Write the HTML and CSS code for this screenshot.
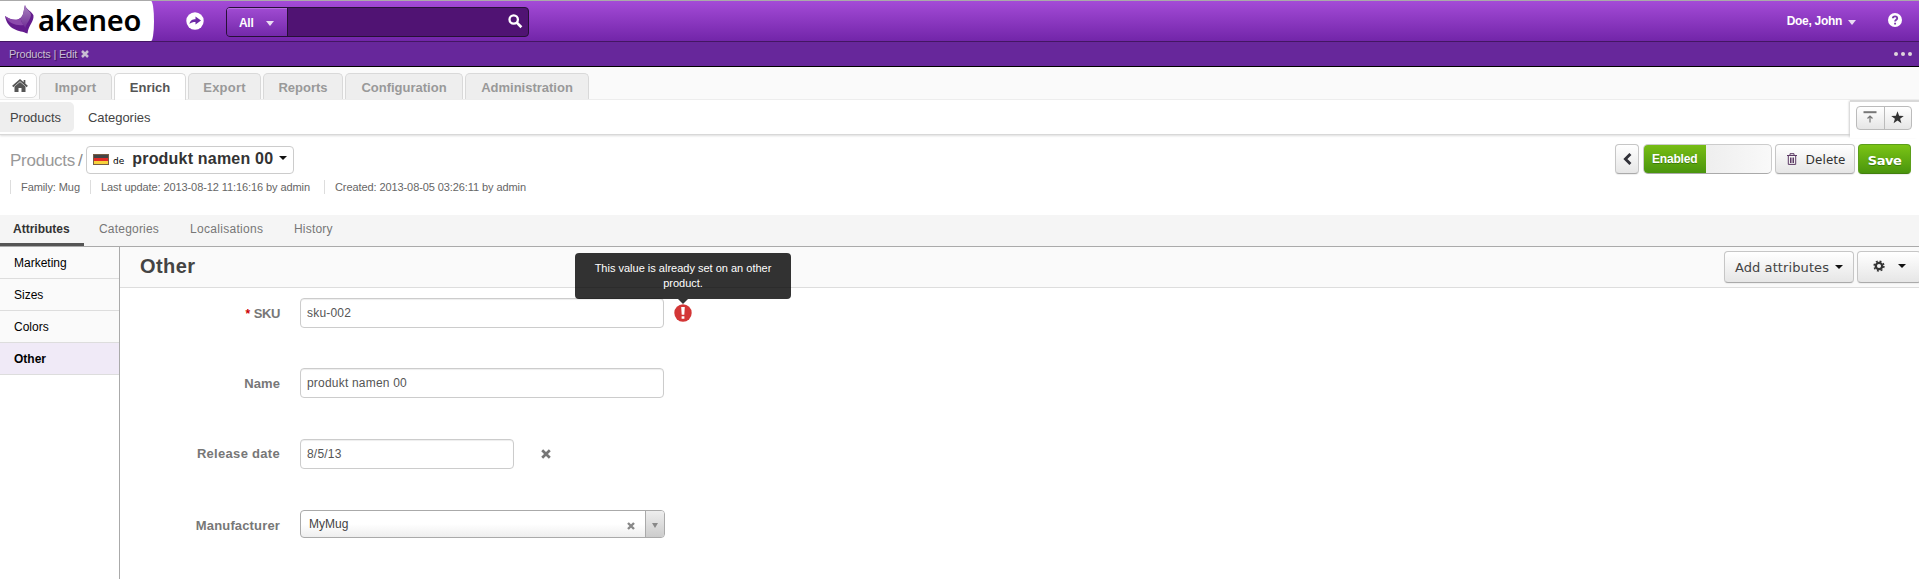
FILE: index.html
```html
<!DOCTYPE html>
<html lang="en">
<head>
<meta charset="utf-8">
<title>Products | Edit</title>
<link rel="stylesheet" href="styles.css">
</head>
<body>
<header class="topbar">
  <div class="brand">
    <svg class="brand-mark" width="30" height="30" viewBox="0 0 30 30"><defs><linearGradient id="wing" x1="0" y1="0" x2="0" y2="1"><stop offset="0" stop-color="#a984bf"/><stop offset="1" stop-color="#6f2d95"/></linearGradient></defs><path d="M20 0C21 5 27 6 28.500 10.500C29 17 23.500 20 22.500 28.500C14 25 3 26 0 11C5 14.500 11 16.500 15.500 13C19 10 18.500 5 20 0Z" fill="#641c8e"/><path d="M20 0C21 5 26 6 26 10C25 16 21 18 20.500 23C17.500 19 16 16 15.500 13C19 10 18.500 5 20 0Z" fill="url(#wing)"/><path d="M0 11C5 14.500 11 16.500 15.500 13C16 16 17 18 18.500 20C12 21 4 19 0 11Z" fill="#8b4aab"/></svg>
    <span class="brand-name">akeneo</span>
  </div>
  <svg class="share" width="18" height="18" viewBox="0 0 18 18"><circle cx="9" cy="9" r="8.700" fill="#fff"/><path d="M3.500 12C4 8.500 6.500 7.300 9.500 7.300V4.500L15 8.500L9.500 12.500V10C7 10 5 10.500 3.500 12Z" fill="#6d2aa5"/></svg>
  <div class="search">
    <div class="search-scope"><span>All</span><i class="caret light"></i></div>
    <svg class="search-icon" width="15" height="15" viewBox="0 0 15 15"><circle cx="5.700" cy="5.500" r="4.200" fill="none" stroke="#fff" stroke-width="2.300"/><path d="M8.800 8.600L13.400 13.200" stroke="#fff" stroke-width="2.700"/></svg>
  </div>
  <div class="account"><span>Doe, John</span><i class="caret light"></i></div>
  <svg class="help" width="14" height="14" viewBox="0 0 14 14"><circle cx="7" cy="7" r="7" fill="#fff"/><path d="M4.900 5.300C4.900 2.800 9.200 2.800 9.200 5.200C9.200 6.700 7.100 6.700 7.100 8.600M7.100 9.700V11.500" fill="none" stroke="#7c3aae" stroke-width="1.900"/></svg>
</header>
<div class="pinbar">
  <span class="pin-title">Products | Edit</span>
  <svg width="8" height="8" viewBox="0 0 8 8"><path d="M1 1L7 7M7 1L1 7" stroke="#c9bdd3" stroke-width="2.500"/></svg>
  <div class="dots"><i></i><i></i><i></i></div>
</div>
<nav class="mainnav">
  <a class="home"><svg width="16" height="14" viewBox="0 0 16 14"><path d="M2.500 7.600L8 3L13.500 7.600V13H9.500V9H6.500V13H2.500Z" fill="#555"/><path d="M.700 7.500L8 1.200L15.300 7.500M12.500 1V4.500" fill="none" stroke="#555" stroke-width="1.700"/></svg></a>
  <a class="tab t-import"><span>Import</span></a>
  <a class="tab t-enrich active"><span>Enrich</span></a>
  <a class="tab t-export"><span>Export</span></a>
  <a class="tab t-reports"><span>Reports</span></a>
  <a class="tab t-config"><span>Configuration</span></a>
  <a class="tab t-admin"><span>Administration</span></a>
</nav>
<div class="subnav">
  <div class="subnav-links"><a class="sub current">Products</a><a class="sub">Categories</a></div>
  <div class="pin-tools">
    <div class="pin-group">
      <span class="pin-button"><svg width="14" height="12" viewBox="0 0 14 12"><path d="M.500 1.200H13.500" stroke="#777" stroke-width="2"/><path d="M7 11.500V5M4.500 7.500L7 5L9.500 7.500" fill="none" stroke="#777" stroke-width="1.200"/></svg></span>
      <span class="pin-button"><svg width="13" height="13" viewBox="0 0 13 13"><path d="M6.500 .300L8.100 4.800L12.800 4.900L9.100 7.700L10.400 12.300L6.500 9.600L2.600 12.300L3.900 7.700L.200 4.900L4.900 4.800Z" fill="#333"/></svg></span>
    </div>
  </div>
</div>
<section class="entity">
  <div class="entity-info">
    <div class="titleline">
      <span class="crumb">Products</span><span class="slash">/</span>
      <div class="locale"><i class="flag"></i><span class="code">de</span><strong>produkt namen 00</strong><i class="caret"></i></div>
    </div>
    <div class="meta"><span class="m-family"><b>Family: Mug</b></span><span class="m-update"><b>Last update: 2013-08-12 11:16:16 by admin</b></span><span class="m-created"><b>Created: 2013-08-05 03:26:11 by admin</b></span></div>
  </div>
  <div class="actions">
    <span class="btn back"><svg width="9" height="12" viewBox="0 0 9 12"><path d="M7.400 1L2.400 6L7.400 11" fill="none" stroke="#303038" stroke-width="2.900"/></svg></span>
    <span class="toggle"><b>Enabled</b></span>
    <span class="btn delete"><svg width="10" height="12" viewBox="0 0 10 12"><path d="M0 2.500H10M3 2V.700H7V2M1.300 3V11.400H8.700V3M3.500 4.500V10M5 4.500V10M6.500 4.500V10" fill="none" stroke="#5c3a64" stroke-width="1"/></svg><span>Delete</span></span>
    <span class="btn save">Save</span>
  </div>
</section>
<nav class="formtabs"><a class="ft ft1 selected"><span>Attributes</span></a><a class="ft ft2">Categories</a><a class="ft ft3">Localisations</a><a class="ft ft4">History</a></nav>
<main class="workspace">
  <aside class="groups"><a>Marketing</a><a>Sizes</a><a>Colors</a><a class="chosen">Other</a></aside>
  <section class="panel">
    <div class="panel-head">
      <h1>Other</h1>
      <span class="btn add"><span>Add attributes</span><i class="caret"></i></span>
      <span class="btn gear"><svg width="12" height="12" viewBox="0 0 12 12"><circle cx="6" cy="6" r="3.200" fill="none" stroke="#333" stroke-width="2.300"/><circle cx="6" cy="6" r="4.900" fill="none" stroke="#333" stroke-width="1.500" stroke-dasharray="1.925 1.925"/></svg><i class="caret"></i></span>
    </div>
    <div class="fields">
      <div class="field"><label class="l-sku"><em>*</em>SKU</label><div class="input"><span>sku-002</span></div>
        <div class="error"><svg width="18" height="18" viewBox="0 0 18 18"><circle cx="9" cy="9" r="8.700" fill="#d33636"/><path d="M7.200 3H10.800L10.300 10.800H7.700ZM7.600 12.200H10.400V14.700H7.600Z" fill="#fff"/></svg><div class="tooltip"><span>This value is already set on an other</span><br><span>product.</span></div></div>
      </div>
      <div class="field"><label>Name</label><div class="input"><span>produkt namen 00</span></div></div>
      <div class="field"><label class="l-date">Release date</label><div class="input date"><span>8/5/13</span></div><svg class="clear" width="10" height="10" viewBox="0 0 10 10"><path d="M1.200 1.200L8.800 8.800M8.800 1.200L1.200 8.800" stroke="#777" stroke-width="2.700"/></svg></div>
      <div class="field last"><label class="l-maker">Manufacturer</label><div class="select"><span>MyMug</span><svg width="8" height="8" viewBox="0 0 8 8"><path d="M1 1L7 7M7 1L1 7" stroke="#888" stroke-width="2.400"/></svg><div class="arrow"><i></i></div></div></div>
    </div>
  </section>
</main>
</body>
</html>
```
FILE: styles.css
```css
* { box-sizing: border-box; }
body { margin: 0; height: 579px; overflow: hidden; background: #fff; color: #444; font: 12px/18px "Liberation Sans", Arial, sans-serif; display: flex; flex-direction: column; }
svg { display: block; flex: none; }
span, strong, b { white-space: nowrap; }
.caret { display: block; width: 0; height: 0; border: 4px solid transparent; border-top-color: #111; border-bottom: 0; flex: none; }
.caret.light { border-top-color: #eadcf3; border-top-width: 5px; }

.topbar { height: 42px; flex: none; border-top: 1px solid #aaa; border-bottom: 1px solid #431663; background: linear-gradient(#a44bd7, #7225a9); display: flex; align-items: flex-start; color: #fff; font-weight: bold; }
.brand { width: 154px; height: 40px; background: #fff; border-radius: 0 3px 3px 0 / 0 20px 20px 0; display: flex; padding: 4px 0 0 5px; }
.brand-name { font: 600 29px/36px "Noto Sans", "Open Sans", sans-serif; color: #000; margin: -3px 0 0 3px; letter-spacing: -.2px; }
.share { margin: 11px 0 0 32px; }
.search { margin: 6px 0 0 22px; width: 303px; height: 30px; border: 1px solid #271037; border-radius: 4px; background: #501373; display: flex; justify-content: space-between; }
.search-scope { width: 61px; border-right: 1px solid #271037; border-radius: 3px 0 0 3px; background: linear-gradient(#a04bd2, #7429aa); box-shadow: inset 0 1px #b76be0; display: flex; align-items: center; padding: 2px 13px 0 12px; justify-content: space-between; letter-spacing: -.3px; }
.search-icon { margin: 6px 5px 0 0; }
.account { margin: 11px 0 0 auto; display: flex; align-items: center; gap: 6px; font-size: 12px; letter-spacing: -.3px; }
.account .caret { margin-top: 2px; }
.help { margin: 12px 17px 0 32px; }

.pinbar { height: 25px; flex: none; background: #67279b; border-bottom: 1px solid #000; display: flex; align-items: center; gap: 4px; padding: 0 7px 0 9px; color: #cabfd4; font-size: 11px; text-shadow: 1px 1px 1px #2d0d49; }
.pin-title { letter-spacing: -.22px; }
.dots { margin-left: auto; display: flex; gap: 3px; margin-top: -1px; }
.dots i { width: 4px; height: 4px; border-radius: 50%; background: #dfd6dc; }

.mainnav { height: 33px; flex: none; background: #fafafa; border-bottom: 1px solid #eee; display: flex; align-items: flex-start; gap: 2px; padding: 6px 0 0 3px; }
.home { width: 34px; height: 25px; background: #fff; border: 1px solid #ddd; border-radius: 5px; display: flex; align-items: center; justify-content: center; }
.tab { height: 26px; border: 1px solid #d9d9d9; border-bottom: 0; border-radius: 5px 5px 0 0; background: #eee; color: #999; font-size: 13px; font-weight: bold; line-height: 27px; text-align: center; }
.tab.active { background: #fff; color: #555; height: 27px; }
.t-import { width: 73px; } .t-enrich { width: 72px; } .t-export { width: 73px; } .t-reports { width: 80px; } .t-config { width: 118px; } .t-admin { width: 124px; }
.t-import, .t-export { letter-spacing: .2px; }

.subnav { height: 35px; flex: none; display: flex; }
.subnav-links { flex: 1; height: 35px; border-bottom: 1px solid #d8d8d8; box-shadow: 0 1px 2px #ddd; display: flex; padding-top: 2px; }
.sub { height: 30px; line-height: 31px; font-size: 13px; padding: 0 14px; letter-spacing: -.05px; }
.sub.current { width: 74px; padding: 0 0 0 10px; background: #eee; border-radius: 0 5px 5px 0; }
.pin-tools { position: relative; width: 69px; height: 38px; flex: none; background: #fff; border-top: 2px solid #d9d9d9; box-shadow: -2px 0 2px -1px #ccc; padding: 4px 6px; }
.pin-group { width: 56px; height: 24px; border: 1px solid #bbb; border-radius: 4px; background: linear-gradient(#fff, #e6e6e6); display: flex; }
.pin-button { flex: 1; display: flex; align-items: center; justify-content: center; padding-bottom: 2px; }
.pin-button + .pin-button { border-left: 1px solid #bbb; }

.entity { height: 80px; flex: none; display: flex; justify-content: space-between; padding: 9px 8px 0 10px; }
.titleline { display: flex; align-items: flex-start; margin-top: 2px; }
.crumb { font-size: 17px; line-height: 29px; color: #999; letter-spacing: -.25px; width: 65px; }
.slash { width: 11px; padding-left: 3px; font-size: 17px; line-height: 29px; color: #888; }
.locale { width: 208px; height: 28px; border: 1px solid #ccc; border-radius: 4px; display: flex; align-items: center; padding: 0 6px; }
.flag { width: 16px; height: 11px; margin-top: -1px; border: 1px solid #775d45; background: linear-gradient(#444 0 33%, #e22b26 33% 67%, #f7d23c 67%); }
.code { font: 9px/16px "DejaVu Sans", sans-serif; color: #000; margin: 2px 0 0 4px; }
.locale strong { font-size: 16px; color: #333; margin: -3px 0 0 8px; letter-spacing: .2px; }
.locale .caret { margin: -4px 0 0 auto; }
.meta { display: flex; margin-top: 5px; font-size: 11px; line-height: 14px; color: #666; letter-spacing: -.09px; }
.meta span { border-left: 1px solid #ddd; padding-left: 10px; height: 14px; }
.meta b { font-weight: normal; }
.m-family { width: 80px; } .m-update { width: 234px; }
.btn { border: 1px solid #c6c6c6; border-bottom-color: #aaa; border-radius: 4px; background: linear-gradient(#fff, #e6e6e6); display: flex; align-items: center; justify-content: center; color: #333; box-shadow: 0 1px 1px #eee; }
.actions { display: flex; height: 30px; }
.back { width: 24px; }
.toggle { width: 129px; height: 30px; margin: 0 3px 0 4px; border: 1px solid #ccc; border-bottom-color: #aaa; border-radius: 5px; background: linear-gradient(to right, #e4e4e4, #f9f9f9); overflow: hidden; }
.toggle b { display: block; width: 62px; height: 28px; background: linear-gradient(#77bd14, #4a950d); color: #fff; line-height: 29px; padding-left: 8px; letter-spacing: -.2px; text-shadow: 0 1px #397c09; }
.delete { width: 80px; gap: 8px; padding-left: 3px; font: 13px "Noto Sans", sans-serif; letter-spacing: .1px; }
.save { width: 53px; margin-left: 3px; background: linear-gradient(#7bc415, #4a950d); border-color: #5b9e1a #5b9e1a #427f0e; color: #fff; font: bold 13px "DejaVu Sans", sans-serif; letter-spacing: -.5px; padding-top: 2px; text-shadow: 0 1px #397c09; }

.formtabs { height: 32px; flex: none; background: #f5f5f5; border-bottom: 1px solid #aaa; display: flex; color: #777; line-height: 28px; }
.ft1 { width: 84px; padding-left: 13px; height: 31px; border-bottom: 3px solid #555; color: #333; font-weight: bold; }
.ft2 { width: 91px; padding-left: 15px; letter-spacing: .2px; } .ft3 { width: 103px; padding-left: 15px; letter-spacing: .3px; } .ft4 { padding-left: 16px; letter-spacing: .2px; }

.workspace { flex: 1; display: flex; min-height: 0; }
.groups { width: 120px; border-right: 1px solid #aaa; display: flex; flex-direction: column; color: #000; }
.groups a { height: 32px; line-height: 32px; padding-left: 14px; background: #fafafa; border-bottom: 1px solid #ddd; }
.groups .chosen { background: #f0eaf7; font-weight: bold; }
.panel { flex: 1; min-width: 0; }
.panel-head { height: 41px; background: #fafafa; border-bottom: 1px solid #ddd; display: flex; padding: 4px 0 0 20px; overflow: hidden; }
h1 { margin: -3px auto 0 0; font-size: 20px; line-height: 37px; color: #444; letter-spacing: .4px; }
.add { width: 130px; height: 32px; gap: 6px; font: 13px "DejaVu Sans", sans-serif; color: #444; }
.add span { letter-spacing: .1px; }
.gear { width: 64px; height: 32px; margin: 0 -2px 0 3px; gap: 13px; padding: 0 0 2px; flex: none; }
.fields { padding-top: 10px; }
.field { height: 71px; display: flex; align-items: flex-start; }
.field:first-child { height: 70px; }
label { width: 160px; text-align: right; font-size: 13px; font-weight: bold; line-height: 31px; color: #777; letter-spacing: .1px; }
.l-sku { letter-spacing: -.4px; }
.l-date { line-height: 29px; letter-spacing: .3px; }
.l-maker { letter-spacing: .15px; }
label em { color: #c00; font-style: normal; font-size: 12px; margin-right: 4px; }
.input { width: 364px; height: 30px; margin-left: 20px; border: 1px solid #ccc; border-radius: 4px; box-shadow: inset 0 1px 1px #eee; padding-left: 6px; line-height: 28px; color: #555; letter-spacing: .2px; }
.date { width: 214px; }
.clear { margin: 10px 0 0 27px; }
.error { position: relative; margin: 6px 0 0 10px; }
.tooltip { position: absolute; left: -99px; top: -51px; width: 216px; height: 46px; padding: 8px 0; border-radius: 4px; background: rgba(0, 0, 0, .8); color: #fff; text-align: center; font-size: 11px; line-height: 15px; }
.tooltip::after { content: ""; position: absolute; left: 103px; top: 46px; border: 5px solid transparent; border-top-color: #333; border-bottom: 0; }
.select { width: 365px; height: 28px; margin-left: 20px; border: 1px solid #aaa; border-radius: 4px; background: linear-gradient(#fff 50%, #eee); display: flex; align-items: center; padding-left: 8px; }
.select > span { margin: -1px auto 0 0; }
.select > svg { margin: 4px 10px 0 0; }
.arrow { width: 19px; height: 26px; border-left: 1px solid #aaa; background: linear-gradient(#eee, #ccc); border-radius: 0 3px 3px 0; display: flex; align-items: center; justify-content: center; }
.arrow i { border: 3.5px solid transparent; border-top: 5px solid #888; border-bottom: 0; margin-top: 2px; }
```
